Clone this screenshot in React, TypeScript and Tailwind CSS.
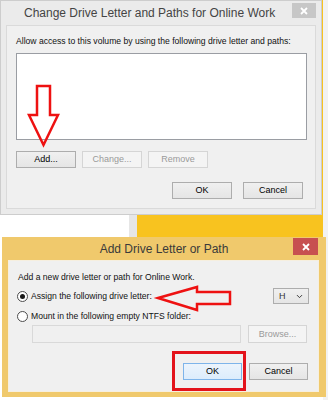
import { ChevronDown } from 'lucide-react';

/** Boutons Windows 8 : normal, désactivé, ou par défaut (bord bleu). */
function WinButton({
  label,
  width,
  disabled,
  primary,
}: {
  label: string;
  width: string;
  disabled?: boolean;
  primary?: boolean;
}) {
  const tone = disabled
    ? 'border-[#d5d5d5] bg-[#f4f4f4] text-[#9a9a9a]'
    : primary
      ? 'border-[#7eb4ea] bg-gradient-to-b from-[#ecf4fc] to-[#dcecfc] text-black'
      : 'border-[#adadad] bg-gradient-to-b from-[#f0f0f0] to-[#e5e5e5] text-black';
  return (
    <div
      className={`flex h-[17px] items-center justify-center border text-[9px] leading-none ${width} ${tone}`}
    >
      {label}
    </div>
  );
}

function CloseGlyph() {
  return (
    <svg width="8" height="8" viewBox="0 0 8 8">
      <path d="M1 1 L7 7 M7 1 L1 7" stroke="white" strokeWidth="1.8" />
    </svg>
  );
}

function Radio({ checked }: { checked?: boolean }) {
  return (
    <span className="flex h-[11px] w-[11px] shrink-0 items-center justify-center rounded-full border border-[#4d4d4d] bg-white">
      {checked && <span className="h-[5px] w-[5px] rounded-full bg-[#1a1a1a]" />}
    </span>
  );
}

function ChangeDialog() {
  return (
    <div className="flex h-[215px] w-[322px] flex-col border border-[#cdcdcd] bg-[#ebebeb]">
      <div className="flex h-[24px] items-start">
        <div className="pl-[23px] pt-[5px] text-[12px] leading-[14px] text-[#444]">
          Change Drive Letter and Paths for Online Work
        </div>
        <div className="ml-auto mr-[5px] mt-[2px] flex h-[15px] w-[24px] items-center justify-center bg-[#c7c7c7]">
          <CloseGlyph />
        </div>
      </div>
      <div className="mx-[5px] mb-[5px] flex flex-1 flex-col border border-[#dadada] bg-[#f0f0f0] pl-[9px] pt-[9px]">
        <div className="text-[8.6px] leading-[12px] text-[#111]">
          Allow access to this volume by using the following drive letter and paths:
        </div>
        <div className="mr-[8px] mt-[6px] h-[87px] border border-[#9a9da3] bg-white" />
        <div className="mt-[11px] flex gap-[6px]">
          <WinButton label="Add..." width="w-[60px]" />
          <WinButton label="Change..." width="w-[60px]" disabled />
          <WinButton label="Remove" width="w-[60px]" disabled />
        </div>
        <div className="mt-[14px] flex justify-end gap-[11px] pr-[12px]">
          <WinButton label="OK" width="w-[60px]" />
          <WinButton label="Cancel" width="w-[60px]" />
        </div>
      </div>
    </div>
  );
}

function AddDialog() {
  return (
    <div className="ml-[2px] flex h-[160px] w-[324px] flex-col bg-[#f0c96c]">
      <div className="relative flex h-[23px] items-center justify-center">
        <div className="text-[12px] leading-[14px] text-[#3a3a3a]">Add Drive Letter or Path</div>
        <div className="absolute right-[8px] top-[1px] flex h-[17px] w-[25px] items-center justify-center bg-[#c75050]">
          <CloseGlyph />
        </div>
      </div>
      <div className="mb-[5px] ml-[6px] mr-[7px] flex flex-1 flex-col border border-[#f6efdf] bg-[#f0f0f0] pl-[8px] pr-[10px] pt-[10px] text-[8.6px] leading-[12px] text-[#111]">
        <div className="pl-[1px]">Add a new drive letter or path for Online Work.</div>
        <div className="mt-[5px] flex h-[16px] items-center">
          <Radio checked />
          <span className="ml-[3px]">Assign the following drive letter:</span>
          <div className="ml-auto mr-[-1px] flex h-[16px] w-[36px] items-center justify-between border border-[#adadad] bg-gradient-to-b from-[#f0f0f0] to-[#e5e5e5] pl-[5px] pr-[4px] text-[9px] text-[#333]">
            <span>H</span>
            <ChevronDown size={9} strokeWidth={2.5} />
          </div>
        </div>
        <div className="mt-[6px] flex h-[12px] items-center">
          <Radio />
          <span className="ml-[3px]">Mount in the following empty NTFS folder:</span>
        </div>
        <div className="mt-[3px] flex h-[18px] gap-[7px] pl-[15px]">
          <div className="h-[18px] w-[209px] border border-[#d9d9d9] bg-[#f0f0f0]" />
          <div className="flex h-[18px] w-[59px] items-center justify-center border border-[#d5d5d5] bg-[#f4f4f4] text-[9px] text-[#9a9a9a]">
            Browse...
          </div>
        </div>
        <div className="mt-[20px] flex justify-end gap-[7px]">
          <WinButton label="OK" width="w-[59px]" primary />
          <WinButton label="Cancel" width="w-[59px]" />
        </div>
      </div>
    </div>
  );
}

export default function App() {
  return (
    <div className="relative h-[400px] w-[328px] overflow-hidden bg-white font-['Liberation_Sans',Arial,sans-serif]">
      {/* fenêtre jaune derrière les boîtes de dialogue */}
      <div className="absolute left-[137px] top-0 h-[237px] w-[186px] bg-[#f8c31f]" />
      <div className="absolute left-[129px] top-[210px] h-[27px] w-[8px] bg-[#e6e6e6]" />
      <div className="absolute left-[323px] top-0 h-[400px] w-[5px] bg-[#f2f2f2]" />

      <div className="relative flex flex-col">
        <ChangeDialog />
        <div className="h-[22px]" />
        <AddDialog />
      </div>

      {/* annotations rouges */}
      <svg
        className="pointer-events-none absolute left-0 top-0"
        width="328"
        height="400"
        viewBox="0 0 328 400"
      >
        <polygon
          points="37,86 50,86 50,115 58,115 43.5,145 29,115 37,115"
          fill="none"
          stroke="#ee1111"
          strokeWidth="2.5"
          strokeLinejoin="miter"
        />
        <polygon
          points="158,298 197,287 197,292 230,292 230,304 197,304 197,310"
          fill="none"
          stroke="#ee1111"
          strokeWidth="2.5"
        />
        <rect x="173.5" y="352.5" width="71" height="37" fill="none" stroke="#e3131b" strokeWidth="3" />
      </svg>
    </div>
  );
}
